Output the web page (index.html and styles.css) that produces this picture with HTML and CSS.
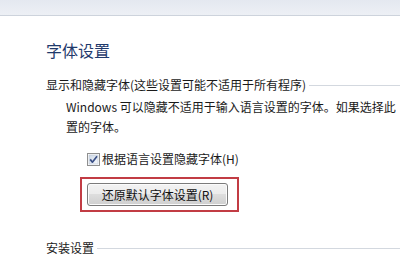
FILE: index.html
```html
<!DOCTYPE html>
<html lang="zh-CN">
<head>
<meta charset="utf-8">
<link rel="stylesheet" href="styles.css">
</head>
<body>
<div class="topbar"></div>
<div class="content">
  <h1 class="title">字体设置</h1>
  <div class="section">
    <span class="section-label">显示和隐藏字体(这些设置可能不适用于所有程序)</span>
    <span class="section-line"></span>
  </div>
  <div class="desc">
    <div class="desc-line">Windows 可以隐藏不适用于输入语言设置的字体。如果选择此</div>
    <div class="desc-line">置的字体。</div>
  </div>
  <label class="check-row">
    <span class="checkbox">
      <svg width="13" height="13" viewBox="0 0 13 13">
        <defs>
          <linearGradient id="cbg" x1="0" y1="0" x2="1" y2="1">
            <stop offset="0" stop-color="#cdd8e6"/>
            <stop offset="1" stop-color="#f7f9fc"/>
          </linearGradient>
        </defs>
        <rect x="0.5" y="0.5" width="12" height="12" fill="#fff" stroke="#8f8f8f"/>
        <rect x="2" y="2" width="9" height="9" fill="url(#cbg)" stroke="#b9c4d2" stroke-width="0.6"/>
        <path d="M3.2 6.4 L5.4 9.2 L10 3.2" fill="none" stroke="#3a4f86" stroke-width="1.7" stroke-linejoin="round"/>
      </svg>
    </span>
    <span class="check-text">根据语言设置隐藏字体(H)</span>
  </label>
  <div class="highlight">
    <button class="btn">还原默认字体设置(R)</button>
  </div>
  <div class="section section-2">
    <span class="section-label">安装设置</span>
    <span class="section-line"></span>
  </div>
</div>
</body>
</html>
```

FILE: styles.css
```css
html, body {
  margin: 0;
  padding: 0;
}
body {
  width: 400px;
  height: 256px;
  overflow: hidden;
  background: #ffffff;
  font-family: "Noto Sans CJK SC", "Noto Sans", sans-serif;
  font-size: 12px;
  color: #1a1a1a;
}
.topbar {
  height: 15px;
  border-bottom: 1px solid #cdd3dc;
  background: linear-gradient(#e4e8f0, #edf0f5);
}
.content {
  padding-left: 46px;
}
.title {
  margin: 24px 0 0 0;
  font-size: 16px;
  line-height: 20px;
  font-weight: normal;
  color: #1f3a6c;
}
.section {
  display: flex;
  align-items: center;
  margin-top: 16px;
  height: 18px;
  line-height: 18px;
  white-space: nowrap;
}
.section-line {
  flex: 1;
  height: 0;
  border-top: 1px solid #d3d8df;
  margin-left: 3px;
}
.desc {
  margin-top: 3px;
  padding-left: 20px;
  line-height: 20px;
}
.desc-line {
  white-space: nowrap;
}
.check-row {
  display: flex;
  align-items: center;
  margin-top: 13px;
  padding-left: 41px;
  height: 18px;
  line-height: 18px;
}
.checkbox {
  display: flex;
  width: 13px;
  height: 13px;
}
.check-text {
  margin-left: 2px;
}
.highlight {
  display: inline-flex;
  margin: 9px 0 0 34px;
  padding: 4px 9px 4px 5px;
  border: 2px solid #c23c44;
}
.btn {
  width: 141px;
  height: 23px;
  padding: 0;
  font-family: inherit;
  font-size: 12px;
  line-height: 20px;
  color: #111;
  border: 1px solid #7b7b7b;
  border-radius: 3px;
  background: linear-gradient(#f3f3f3 0%, #ebebeb 50%, #dddddd 50%, #cfcfcf 100%);
  box-shadow: inset 0 0 0 1px #fbfbfb;
}
.section-2 {
  margin-top: 27px;
}
```
